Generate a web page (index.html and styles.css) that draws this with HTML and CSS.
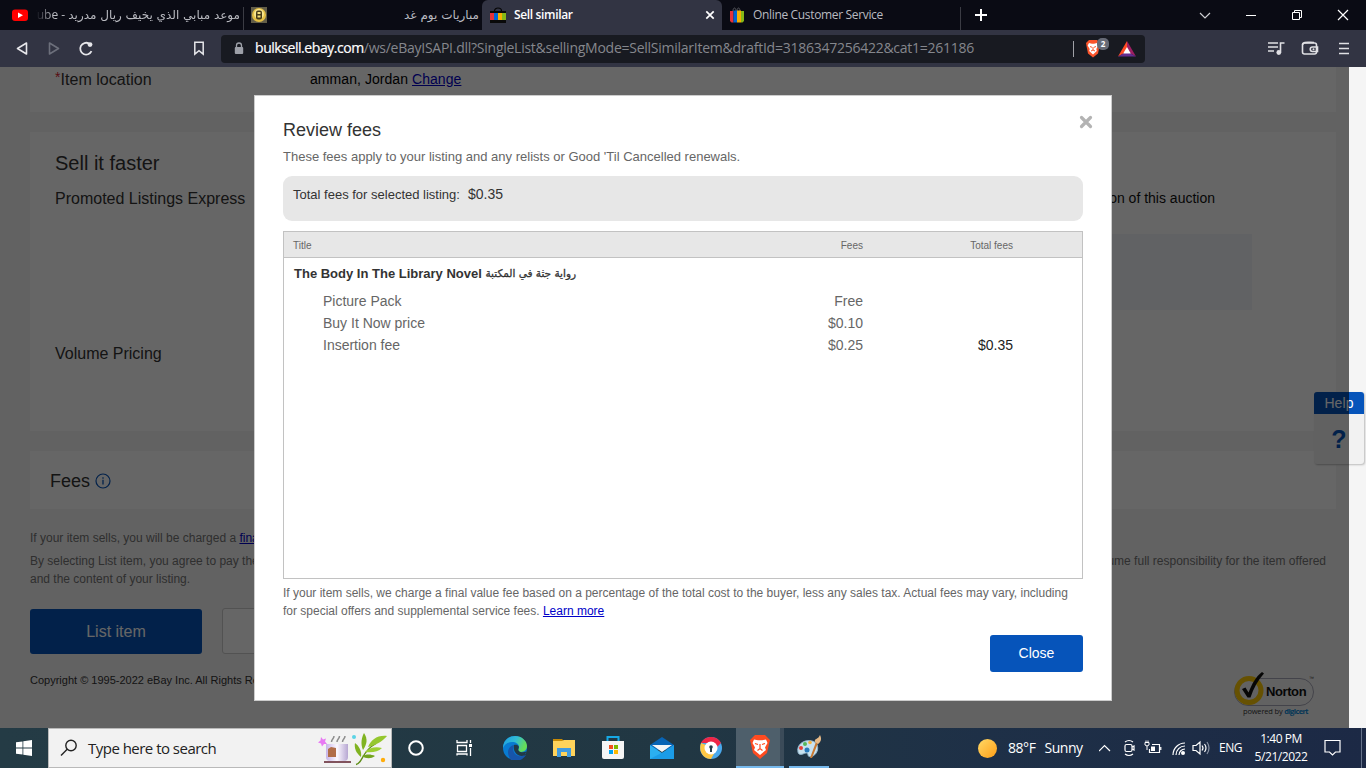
FILE: index.html
```html
<!DOCTYPE html>
<html lang="en">
<head>
<meta charset="utf-8">
<title>Sell similar</title>
<link rel="stylesheet" href="styles.css">
</head>
<body>
<div class="screen">
  <header class="tabs">
    <div class="tab tab-yt">
      <svg class="fav" width="16" height="16" viewBox="0 0 16 16"><rect x="0" y="2.500" width="16" height="11.500" rx="3" fill="#f00"/><path d="M6 5.500l5 2.700-5 2.700z" fill="#fff"/></svg>
      <span class="tab-rtl tab-fade" dir="rtl"><span class="ar">موعد مبابي الذي يخيف ريال مدريد</span> - YouTube</span>
    </div>
    <div class="tab tab-two">
      <svg class="fav" width="16" height="16" viewBox="0 0 16 16"><rect width="16" height="16" fill="#625d48"/><circle cx="8" cy="8" r="7" fill="#e5c044"/><circle cx="8" cy="7" r="5" fill="#f8e690"/><rect x="5" y="3.500" width="6" height="9" rx="2" fill="#473b18"/><path d="M6.500 5h3v2h-3zM6.500 8.500h3v2h-3z" fill="#f6e07a"/></svg>
      <span class="tab-rtl" dir="rtl"><span class="ar">مباريات يوم غد</span></span>
    </div>
    <div class="tab tab-active">
      <svg class="fav" width="16" height="16" viewBox="0 0 16 16"><path d="M4.500 4C4.500 0 11.500 0 11.500 4" fill="none" stroke="#050505" stroke-width="1.200"/><rect y="4" width="16" height="12" fill="#090909"/><path d="M0 6h4v7H0z" fill="#e53238"/><path d="M4 6h4v7H4z" fill="#0064d2"/><path d="M8 6h4v7H8z" fill="#f5af02"/><path d="M12 6h4v7h-4z" fill="#86b817"/></svg>
      <span class="tab-title">Sell similar</span>
      <svg class="tab-x" width="10" height="10" viewBox="0 0 10 10"><path d="M1.300 1.300l7.400 7.400M8.700 1.300L1.300 8.700" stroke="#fff" stroke-width="1.700"/></svg>
    </div>
    <div class="tab tab-four">
      <svg class="fav" width="16" height="16" viewBox="0 0 16 16"><path d="M4 4c0-4 3-4 3 0M8 4c0-4 3-4 3 0" fill="none" stroke="#55565c"/><path d="M1 4h3.500v11.500H2.500L1 14z" fill="#e53238"/><path d="M4.500 3.500H8v12H4.500z" fill="#0064d2"/><path d="M8 3.500h4v12H8z" fill="#f5af02"/><path d="M12 4h3v10l-1.500 1.500H12z" fill="#86b817"/></svg>
      <span class="tab-title light">Online Customer Service</span>
    </div>
    <svg class="newtab" width="12" height="12" viewBox="0 0 12 12"><path d="M6 0v12M0 6h12" stroke="#fff" stroke-width="2"/></svg>
    <svg class="winctl" width="150" height="14" viewBox="0 0 150 14"><g fill="none" stroke="#fff"><path d="M1 5l5 5 5-5" stroke="#cfcfd3" stroke-width="1.200"/><path d="M47 7.500h10"/><path d="M93.500 4.500h7v7h-7zM95.500 4.500v-2h7v7h-2"/><path d="M139 2l10 10M149 2l-10 10" stroke-width="1.200"/></g></svg>
  </header>

  <div class="toolbar">
    <svg class="nav" width="80" height="18" viewBox="0 0 80 18"><g fill="none" stroke-width="1.600" stroke-linejoin="round"><path d="M10.500 3L1.500 8.500l9 5.500z" stroke="#e6e6ea"/><path d="M33.500 3l9 5.500-9 5.500z" stroke="#6c6f7b"/><path d="M75.500 11.200A5.900 5.900 0 1 1 73 3.500" stroke="#e6e6ea" stroke-width="1.800"/></g><circle cx="74" cy="4.600" r="2.400" fill="#e6e6ea"/></svg>
    <svg class="bookmark" width="12" height="16" viewBox="0 0 12 16"><path d="M1.800 1.200h8.400v12L6 9.700l-4.200 3.500z" fill="none" stroke="#e6e6ea" stroke-width="1.500"/></svg>
    <div class="address">
      <svg class="lock" width="10" height="13" viewBox="0 0 10 13"><path d="M2.500 6V3.500a2.500 2.500 0 0 1 5 0V6" fill="none" stroke="#9da0a8" stroke-width="1.300"/><rect x=".8" y="5" width="8.400" height="7" rx="1" fill="#9da0a8"/></svg>
      <span class="url"><span class="host">bulksell.ebay.com</span><span class="path">/ws/eBayISAPI.dll?SingleList&amp;sellingMode=SellSimilarItem&amp;draftId=3186347256422&amp;cat1=261186</span></span>
      <span class="bar"></span>
      <span class="shield"><svg width="16" height="19" viewBox="0 0 16 19"><path d="M4 1h8l1.500 1.500L15 4l-.5 3-1.500 7.500L8 18.500 3 14.500 1.500 7 1 4l1.500-1.500z" fill="#fb542b"/><path d="M4 4l3 .8h2L12 4l1.300 2.500-2 3.500.5 2L8 15.500 4.200 12l.5-2-2-3.500z" fill="#fff"/><path d="M5 7.500l2 .8M11 7.500l-2 .8M8 8v3M6 12l2-1 2 1" stroke="#fb542b" fill="none"/></svg><span class="badge">2</span></span>
      <svg class="bat" width="18" height="16" viewBox="0 0 18 16"><path d="M9 0L0 15.500l9-5z" fill="#ff4a24"/><path d="M9 0l9 15.500-9-5z" fill="#9e1f63"/><path d="M0 15.500h18l-9-5z" fill="#662d91"/><path d="M9 6l-3.800 6.500h7.600z" fill="#fff"/></svg>
    </div>
    <svg class="tools" width="84" height="18" viewBox="0 0 84 18"><g fill="none" stroke="#e0e0e4" stroke-width="1.600"><path d="M0 3h10M0 7h10M0 11h6M12.500 12.500V3h4"/><rect x="34.500" y="3" width="14" height="11" rx="2"/><path d="M34.500 5C35 1.500 39 2.500 46 2.500M49.500 7h-5a2 2 0 0 0 0 4.500h5z"/><path d="M71 3.500h10M71 8.500h10M71 13.500h10"/></g><circle cx="10.800" cy="12.500" r="2.400" fill="#e0e0e4"/><circle cx="45.500" cy="9.300" r="1" fill="#e0e0e4"/></svg>
  </div>

  <main class="page">
    <section class="card card-loc"><span class="label"><sup>*</sup>Item location</span><span class="loc">amman, Jordan <a>Change</a></span></section>
    <section class="card card-fast">
      <h2>Sell it faster</h2>
      <div class="promo"><span class="label">Promoted Listings Express</span><span class="auction">Your ad fee is based on the duration of this auction</span></div>
      <div class="tip"></div>
      <div class="label volume">Volume Pricing</div>
    </section>
    <section class="card card-fees"><span>Fees</span><svg width="16" height="16" viewBox="0 0 16 16"><circle cx="8" cy="8" r="7" fill="none" stroke="#0654ba" stroke-width="1.200"/><path d="M8 6.800v4.700M8 4.200v1.500" stroke="#0654ba" stroke-width="1.300"/></svg></section>
    <p class="legal first">If your item sells, you will be charged a <a>final value fee</a></p>
    <div class="legal terms"><span>By selecting List item, you agree to pay the fees</span><span>assume full responsibility for the item offered</span></div>
    <p class="legal">and the content of your listing.</p>
    <div class="actions"><button class="list">List item</button><button class="preview"></button></div>
    <footer><span class="copy">Copyright © 1995-2022 eBay Inc. All Rights Reserved.</span>
      <div class="norton"><div class="norton-box">Norton</div><svg class="check" width="34" height="36" viewBox="0 0 34 36"><circle cx="16" cy="19.500" r="12" fill="none" stroke="#ffcb05" stroke-width="5"/><path d="M9 18l3.500-1.500 3 5C19 13 22.500 6 29 1l2 1.500C25 9 20.500 17 17.500 26.500h-3z" fill="#111"/></svg><div class="powered">powered by <b>digicert</b></div><span class="tm">™</span></div>
    </footer>
    <aside class="help"><div class="help-head">Help</div><div class="help-q">?</div></aside>
    <div class="shade"></div>

    <div class="modal">
      <svg class="close-x" width="14" height="14" viewBox="0 0 14 14"><path d="M2.500 2.500l9 9M11.500 2.500l-9 9" stroke="#b3b3b3" stroke-width="3.200" stroke-linecap="round"/></svg>
      <h1>Review fees</h1>
      <p class="intro">These fees apply to your listing and any relists or Good 'Til Cancelled renewals.</p>
      <div class="total"><span>Total fees for selected listing:</span><span class="amount">$0.35</span></div>
      <div class="table">
        <div class="row head"><span>Title</span><span class="num">Fees</span><span class="sum">Total fees</span></div>
        <div class="item">The Body In The Library Novel <span class="item-ar">رواية جثة في المكتبة</span></div>
        <div class="row fee"><span>Picture Pack</span><span class="num">Free</span><span class="sum"></span></div>
        <div class="row fee"><span>Buy It Now price</span><span class="num">$0.10</span><span class="sum"></span></div>
        <div class="row fee"><span>Insertion fee</span><span class="num">$0.25</span><span class="sum">$0.35</span></div>
      </div>
      <p class="note">If your item sells, we charge a final value fee based on a percentage of the total cost to the buyer, less any sales tax. Actual fees may vary, including<br>for special offers and supplemental service fees. <a>Learn more</a></p>
      <button class="close">Close</button>
    </div>
  </main>

  <div class="taskbar">
    <div class="start"><svg width="16" height="16" viewBox="0 0 16 16"><path d="M0 2.300l6.500-.9v6.100H0zM7.300 1.200L16 0v7.500H7.300zM0 8.400h6.500v6.200L0 13.700zM7.300 8.400H16V16l-8.700-1.200z" fill="#fff"/></svg></div>
    <div class="search">
      <svg width="18" height="18" viewBox="0 0 18 18"><circle cx="11" cy="6.500" r="5.200" fill="none" stroke="#222" stroke-width="1.400"/><path d="M7.200 10.300L1 16.500" stroke="#222" stroke-width="1.400"/></svg>
      <span>Type here to search</span>
      <svg class="tea" width="72" height="36" viewBox="0 0 72 36"><defs><linearGradient id="cup"><stop stop-color="#c7b4e8"/><stop offset=".5" stop-color="#fbf8ff"/><stop offset="1" stop-color="#b7a7d2"/></linearGradient></defs><path d="M3 7l2 2.500 3-1-1 3 2 2.500-3 0-2 2.500-1-3-3-1 2.500-2z" fill="#e879f3"/><g fill="none" stroke="#8d8d8d" stroke-width="1.500"><path d="M13.500 12c0-3 2.500-3 2.500-6M19 12c0-3 2.500-3 2.500-6M24.500 12c0-3 2.500-3 2.500-6"/></g><rect x="6" y="31" width="27" height="2" fill="#81535d"/><path d="M8 14h22v13q0 4-4 4H12q-4 0-4-4z" fill="url(#cup)"/><path d="M10 19l3-2 5 1v9h-8z" fill="#b16d49"/><circle cx="36" cy="7" r="2" fill="#5bd4e6"/><circle cx="65" cy="30" r="2.200" fill="#ffad0a"/><path d="M38 34.500c7-1 5-13 20-21" fill="none" stroke="#5f8e18" stroke-width="1.400"/><g fill="#80b321"><path d="M45 20C42 13 44 7 46 3c4 6 3 11-1 17z"/><path d="M50 17c3-7 9-12 19-11-4 5-11 9-19 11z" fill="#95c72f"/><path d="M43 27c-5-4-7-9-6-14 4 3 7 8 6 14z"/><path d="M47 22c4-4 10-6 17-4-4 4-10 5-17 4z" fill="#9dcf32"/><path d="M44 26c4-2 9-2 13 0-4 3-9 3-13 0z" fill="#72a41e"/></g></svg>
    </div>
    <div class="apps">
      <div class="app a1"><svg width="18" height="18" viewBox="0 0 18 18"><circle cx="9" cy="9" r="6.800" fill="none" stroke="#fff" stroke-width="2"/></svg></div>
      <div class="app a2"><svg width="18" height="18" viewBox="0 0 18 18"><path d="M2 1v2.500h10V1M2.500 6.500h9v6h-9zM2 16.500V15h10v1.500M15.500 1v3M15.500 9v8" fill="none" stroke="#fff" stroke-width="1.300"/><rect x="14" y="5" width="3" height="3" fill="#fff"/></svg></div>
      <div class="app a3"><svg width="24" height="24" viewBox="0 0 24 24"><defs><linearGradient id="eg" x1="0" y1="0" x2="1" y2=".35"><stop stop-color="#1b9de2"/><stop offset=".55" stop-color="#32bcd5"/><stop offset="1" stop-color="#66dd58"/></linearGradient></defs><circle cx="12" cy="12" r="12" fill="#087bd1"/><path d="M0 12C0 5 5 0 12 0c7 0 12 5 12 10 0 7-9 7-9 4 0-1 1-1 1-3 0-3-3-5-7-5-5 0-8 3-9 6z" fill="url(#eg)"/><path d="M8 24C2 16 6 10 11 9c-2 3-1 10 5 11 3 1 6-1 7-1-4 6-10 7-15 5z" fill="#1755aa"/><path d="M11 9c3-1 6 1 4.500 3.500-1 3 3 5 8 3l-2 4c-7 2-12-4-10.500-10.500z" fill="#223946"/></svg></div>
      <div class="app a4"><svg width="22" height="20" viewBox="0 0 22 20"><path d="M0 1h9l2 2H0z" fill="#c78a05"/><path d="M0 3h9l2-1h11v16H0z" fill="#ffd35b"/><path d="M4 10h14v9h-4v-5H8v5H4z" fill="#419bdf"/></svg></div>
      <div class="app a5"><svg width="24" height="24" viewBox="0 0 24 24"><path d="M6.500 6V1h11v5" fill="none" stroke="#16a9e6" stroke-width="2"/><path d="M1 5h22v16q0 2-2 2H3q-2 0-2-2z" fill="#f5f5f5"/><path d="M8 9h4v4H8z" fill="#f25022"/><path d="M13 9h4v4h-4z" fill="#7fba00"/><path d="M8 14h4v4H8z" fill="#00a4ef"/><path d="M13 14h4v4h-4z" fill="#ffb900"/></svg></div>
      <div class="app a6"><svg width="24" height="22" viewBox="0 0 24 22"><path d="M0 8l12-8 12 8v5H0z" fill="#0864b5"/><path d="M2 8h20l-10 7z" fill="#f3f5f7"/><path d="M0 8l12 8 12-8v14H0z" fill="#2baff0"/><path d="M0 22L15 14l9-6v14z" fill="#1594e3" opacity=".7"/></svg></div>
      <div class="app a7"><svg width="22" height="22" viewBox="0 0 22 22"><circle cx="11" cy="11" r="11" fill="#4aa9ec"/><path d="M1 6C5-2 17-2 21 6l-5 5-9-5z" fill="#ee2647"/><path d="M1 6c-3 9 3 16 10 16l4-7-9-7z" fill="#ffc744"/><circle cx="11" cy="11" r="6.500" fill="#fff"/><circle cx="11" cy="10" r="1.800" fill="#253f4c"/><path d="M10 10h2v5h-2z" fill="#253f4c"/></svg></div>
      <div class="app a8"><svg width="20" height="24" viewBox="0 0 20 24"><path d="M5 0h10l2 2 3 3-1 4-2 9-7 6-7-6L1 9 0 5l3-3z" fill="#ff4b20"/><path d="M4 4.500l4 .8h4l4-.8 1.500 3.500-2.500 4.500 1 2.500-6 5-6-5 1-2.500L2.500 8z" fill="#fff"/><path d="M5 8.500l3 1M15 8.500l-3 1M10 9v4.500M7.500 15.500l2.500-2 2.500 2" stroke="#ff4b20" stroke-width="1.200" fill="none"/></svg></div>
      <div class="app a9"><svg width="26" height="24" viewBox="0 0 26 24"><path d="M2 17C0 8 12 2 20 8c3 4 2 10-3 13-2 1-5 1-5-1 0-3-3-2-5-1-3 1-5 0-5-2z" fill="#c8e2f0" stroke="#91b6cc"/><circle cx="5" cy="13" r="2" fill="#e83f39"/><circle cx="9" cy="9" r="2" fill="#55b65c"/><circle cx="14" cy="7.500" r="1.800" fill="#f5b13d"/><circle cx="11" cy="15" r="2.500" fill="#2779ba"/><path d="M20 7l2 1-6 15h-2z" fill="#c87932"/><path d="M19 7c-1-4 3-2 5-7 2 4 1 7-2 9z" fill="#e6ba88"/></svg></div>
    </div>
    <div class="weather"><span class="sun"></span><span class="temp">88°F</span><span>Sunny</span></div>
    <svg class="tray" width="112" height="20" viewBox="0 0 112 20"><g fill="none" stroke="#fff" stroke-width="1.200"><path d="M0 13l5.500-5.500L11 13"/><rect x="26" y="6.500" width="7" height="7" rx="1.500"/><path d="M33 9l2-1v4l-2-1M26 4q4-3 8 0M26 16q4 3 8 0"/><path d="M53 6.500h7.500v8H50.500V11M61.800 9v3"/><path d="M46 4.500v2.500q2 2 4 0V4.500zM48 8v4M47 4.500v-2M49 4.500v-2" stroke-width="1"/><path d="M74 17A12 12 0 0 1 86 5M77 17a9 9 0 0 1 9-9M80 17a6 6 0 0 1 6-6"/><path d="M94 7.500h3l4-3.500v12l-4-3.500h-3zM103 7.500q2 2.500 0 5M105.500 6q3 4 0 8"/><path d="M108 4q4 6 0 12" stroke="#8791a3"/></g><rect x="52" y="8.500" width="4" height="4.500" fill="#fff"/><circle cx="84" cy="15" r="2" fill="#fff"/></svg>
    <span class="lang">ENG</span>
    <div class="clock"><span>1:40 PM</span><span>5/21/2022</span></div>
    <svg class="notice" width="18" height="18" viewBox="0 0 18 18"><path d="M1 1.500h15v11.500h-4.500L8.500 16l-3-3H1z" fill="none" stroke="#fff" stroke-width="1.200"/></svg>
    <span class="edge"></span>
  </div>
</div>
</body>
</html>
```
FILE: styles.css
```css
* { box-sizing: border-box; }
body { margin: 0; font-family: "Liberation Sans", Arial, sans-serif; }
h1, h2, p { margin: 0; font-weight: 400; }
button { font: inherit; padding: 0; margin: 0; }
a { color: #0000c8; text-decoration: underline; }
svg { display: block; flex: none; }
.screen { width: 1366px; height: 768px; overflow: hidden; display: flex; flex-direction: column; }

/* browser tabs */
.tabs { height: 30px; flex: none; background: #0a0b14; display: flex; align-items: center; color: #b9bac0; font: 12px/16px "Open Sans", sans-serif; white-space: nowrap; }
.tab { height: 30px; display: flex; align-items: center; gap: 8px; flex: none; }
.tab-yt { width: 244px; padding: 0 4px 0 12px; background: linear-gradient(#3b3c44, #3b3c44) right bottom / 1px 23px no-repeat; }
.tab-two { width: 238px; padding: 0 3px 0 7px; }
.tab-rtl { flex: 1; min-width: 0; overflow: hidden; }
.tab-fade { -webkit-mask-image: linear-gradient(90deg, transparent, #000 16px); mask-image: linear-gradient(90deg, transparent, #000 16px); }
.ar { font-family: "DejaVu Sans", sans-serif; font-size: 12px; }
.tab-active { width: 240px; background: #323443; border-radius: 6px 6px 0 0; color: #fff; padding: 0 7px 0 8px; }
.tab-title { flex: 1; font-weight: 600; letter-spacing: -.35px; }
.tab-title.light { font-weight: 400; letter-spacing: -.34px; }
.tab-four { width: 239px; padding-left: 7px; background: linear-gradient(#3b3c44, #3b3c44) right bottom / 1px 23px no-repeat; }
.newtab { margin-left: 14px; }
.winctl { margin-left: auto; margin-right: 17px; }

/* toolbar */
.toolbar { height: 37px; flex: none; background: #323443; display: flex; align-items: center; }
.nav { margin-left: 16px; }
.bookmark { margin-left: 97px; }
.address { margin-left: 16px; width: 924px; height: 28px; border-radius: 4px; background: #181a21; display: flex; align-items: center; padding-left: 13px; }
.url { margin-left: 11px; width: 828px; font: 14px/20px "Open Sans", sans-serif; white-space: nowrap; color: #85878d; margin-top: -1px; }
.host { color: #fff; letter-spacing: -.44px; -webkit-text-stroke: .2px #fff; }
.path { letter-spacing: -.255px; }
.bar { width: 1px; height: 16px; background: #a0a1a7; margin-left: -10px; }
.shield { position: relative; margin-left: 11px; }
.badge { position: absolute; left: 12px; top: -1px; width: 12px; height: 12px; border-radius: 5px; background: #666a76; color: #fff; font: 700 8px/12px "Open Sans", sans-serif; text-align: center; }
.bat { margin-left: 17px; }
.tools { margin-left: 123px; }

/* listing form */
.page { position: relative; height: 661px; flex: none; background: #f5f5f5; padding: 0 30px; overflow: hidden; color: #333; }
.card { width: 1306px; background: #fff; }
.card-loc { height: 45px; display: flex; padding: 2px 0 0 25px; line-height: 20px; }
.card-loc .label { width: 255px; padding-top: 1px; letter-spacing: .04px; }
.label { font-size: 16px; }
.label sup { color: #dd1e31; font-size: 14px; line-height: 0; vertical-align: 3px; }
.loc { font-size: 14px; color: #000; letter-spacing: .06px; }
.card-fast { margin-top: 20px; height: 299px; padding: 19px 0 0 25px; }
.card-fast h2 { font-size: 20px; line-height: 24px; }
.promo { display: flex; line-height: 20px; margin-top: 13px; width: 1160px; justify-content: space-between; white-space: nowrap; }
.promo .label { padding-top: 1px; }
.auction { font-size: 14px; color: #111; }
.tip { width: 500px; height: 76px; margin: 25px 0 0 697px; background: #f2f6fb; }
.volume { line-height: 20px; margin-top: 34px; }
.card-fees { margin-top: 20px; height: 58px; display: flex; align-items: center; padding: 2px 0 0 20px; font-size: 18px; gap: 5px; }
.legal { font-size: 12px; line-height: 18px; color: #767676; }
.first { margin: 20px 0 5px; }
.terms { display: flex; justify-content: space-between; width: 1296px; }
.actions { display: flex; gap: 20px; margin-top: 21px; }
.actions button { width: 172px; height: 45px; border: 0; border-radius: 3px; background: #0654ba; color: #fff; font-size: 16px; }
.actions .preview { background: #fff; border: 1px solid #ccc; height: 46px; margin-top: -1px; }
footer { display: flex; justify-content: space-between; width: 1284px; padding-top: 17px; }
.copy { font-size: 11px; line-height: 18px; }
.norton { position: relative; width: 80px; height: 48px; padding-top: 7px; }
.norton-box { height: 28px; border: 1px solid #a8a8b8; border-radius: 14px; padding-left: 31px; font: 700 13px/26px "Liberation Sans", sans-serif; letter-spacing: -.4px; color: #111; }
.check { position: absolute; left: -1px; top: 0; }
.powered { padding-left: 9px; margin-top: -1px; font: 7.500px/12px "Open Sans", sans-serif; white-space: nowrap; letter-spacing: -.18px; }
.powered b { color: #0a88d8; letter-spacing: -.6px; }
.tm { position: absolute; right: 0; top: 4px; font-size: 5px; }
.help { position: absolute; left: 1314px; top: 325px; width: 50px; height: 72px; border-radius: 3px; background: #f2f2f2; box-shadow: 1px 1px 2px #bbb; text-align: center; color: #0654ba; }
.help-head { height: 22px; background: #0654ba; color: #fff; font-size: 14px; line-height: 22px; border-radius: 3px 3px 0 0; letter-spacing: .1px; }
.help-q { font-weight: 700; font-size: 25px; line-height: 50px; }
.shade { position: absolute; left: 0; top: 0; width: 1349px; height: 661px; background: rgba(0, 0, 0, .6); }

/* fees dialog */
.modal { position: absolute; left: 254px; top: 28px; width: 858px; height: 606px; background: #fff; border: 1px solid #ccc; padding: 22px 28px 0; }
.close-x { position: absolute; right: 18.500px; top: 18.500px; }
.modal h1 { font-size: 18px; line-height: 24px; }
.intro { font-size: 13px; line-height: 18px; margin-top: 6px; color: #666; }
.total { height: 45px; background: #e7e7e7; border-radius: 9px; margin-top: 10px; padding: 10px; font-size: 13px; line-height: 18px; display: flex; gap: 8px; }
.amount { font-size: 14px; line-height: 16px; }
.table { height: 348px; border: 1px solid #c2c2c2; margin-top: 10px; }
.row { display: grid; grid-template-columns: 1fr 100px 150px; }
.num, .sum { text-align: right; }
.head { height: 26px; border-bottom: 1px solid #c2c2c2; background: #e7e7e7; color: #666; font-size: 10px; line-height: 28px; padding: 0 69px 0 9px; }
.item { padding: 7px 0 0 10px; height: 32px; line-height: 18px; font-size: 13px; font-weight: 700; white-space: nowrap; }
.item-ar { font: 10.500px/16px "DejaVu Sans", sans-serif; -webkit-text-stroke: .3px #333; vertical-align: 1px; }
.fee { padding: 0 69px 0 39px; font-size: 14px; line-height: 22px; color: #666; }
.fee .sum { color: #222; }
.note { font-size: 12px; line-height: 18px; color: #666; margin-top: 5px; white-space: nowrap; }
.close { display: block; margin: 15px 0 0 auto; width: 93px; height: 37px; border: 0; border-radius: 3px; background: #0654ba; color: #fff; font-size: 14px; padding-bottom: 2px; }

/* taskbar */
.taskbar { height: 40px; flex: none; background: linear-gradient(90deg, #243b45, #213743 50%, #1e3047 72%, #1c2945); display: flex; align-items: center; color: #fff; font: 12px/18px "Open Sans", sans-serif; white-space: nowrap; }
.start { width: 48px; display: flex; justify-content: center; }
.search { width: 344px; height: 40px; background: #f2f2f2; border: 1px solid #b9b9b9; display: flex; align-items: center; padding: 0 1px 0 11px; color: #222; font-size: 15px; }
.search span { margin-left: 10px; letter-spacing: -.52px; }
.tea { margin-left: auto; }
.apps { display: flex; width: 440px; }
.app { height: 40px; width: 49px; display: flex; align-items: center; justify-content: center; flex: none; }
.a1 { width: 48px; }
.a2 { width: 47px; }
.a3 { width: 55px; }
.a4 { width: 44px; }
.a5 { width: 53px; }
.a6 { width: 46px; }
.a7 { width: 51px; }
.a8 { width: 48px; background: linear-gradient(90deg, #4e5f6b 44px, #3b4b59 44px); padding-right: 1px; border-bottom: 2px solid #76b9ed; }
.a9 { width: 40px; margin-left: 5px; border-bottom: 2px solid #76b9ed; }
.weather { margin-left: 146px; display: flex; align-items: center; width: 121px; font-size: 14px; letter-spacing: -.45px; }
.sun { width: 19px; height: 19px; border-radius: 50%; background: linear-gradient(135deg, #ffd967, #ff9f16); margin-right: 11px; }
.temp { margin-right: 9px; }
.tray { flex: none; }
.lang { margin-left: 8px; width: 35px; letter-spacing: -.45px; }
.clock { width: 54px; display: flex; flex-direction: column; align-items: center; letter-spacing: -.45px; }
.notice { margin-left: 16px; }
.edge { width: 1px; height: 40px; background: #66738a; margin-left: auto; margin-right: 4px; }
```
